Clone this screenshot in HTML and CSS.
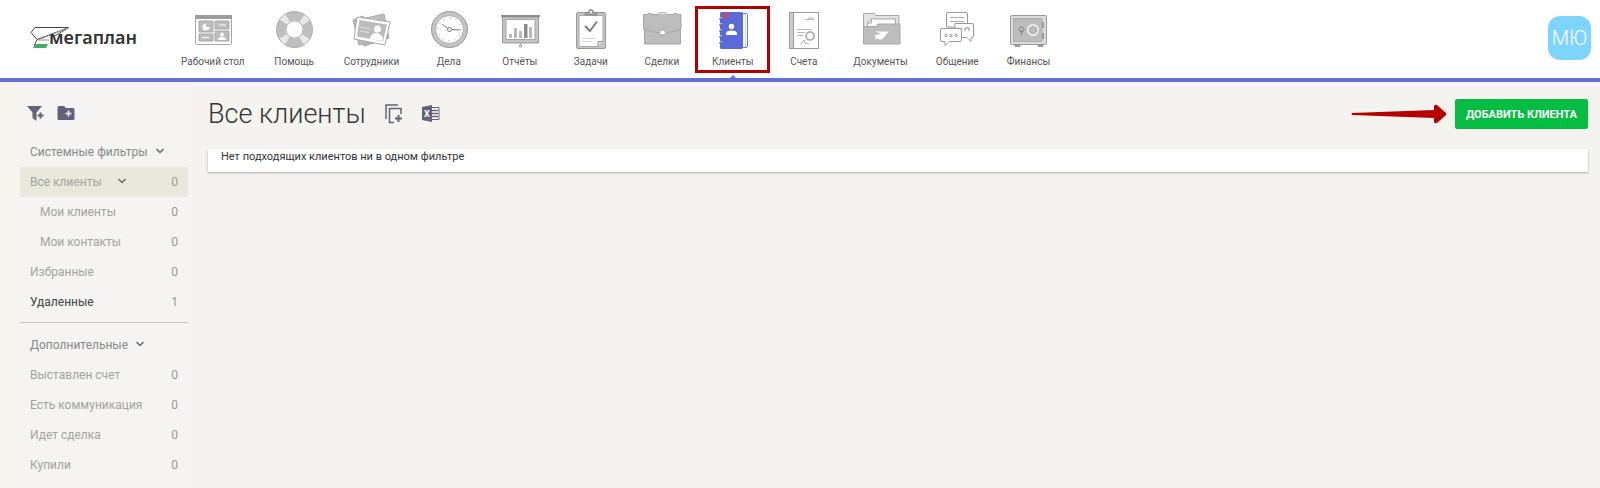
FILE: index.html
```
<!DOCTYPE html>
<html lang="ru">
  <head>
    <meta charset="utf-8" />
    <meta name="viewport" content="width=device-width, initial-scale=1.0" />
    <title>Все клиенты - Мегаплан</title>
    <link rel="stylesheet" href="styles.css">
  </head>

  <body>
    <header class="topbar">
      <a href="#" class="logo" aria-label="Мегаплан">
        <svg class="logo-plane" width="40" height="24" viewBox="0 0 40 24" fill="none" stroke="#444" stroke-linejoin="round">
          <path d="M6 18h12l-2 4H3z" fill="#3fae62" stroke="none" />
          <path d="M5 1.500h34L23 11M5 1.500l-4 5 6 7L39 1.500M7 13.500 4 20" />
          <path d="M39 1.500 8 14l11 0" stroke="#999" />
        </svg>
        <span class="logo-text">мегаплан</span>
      </a>

      <nav class="menu">
        <a href="#" class="menu-item">
          <svg viewBox="0 0 44 40" fill="#bdbdbd">
            <rect x="4.500" y="6.500" width="36" height="29" rx="1" fill="#fff" stroke="#a5a5a5" />
            <path d="M4 6h37v4H4z" fill="#9d9d9d" />
            <path d="M8 12h14v11H8zM24 12h14v8H24zM8 25h14v7H8zM24 22h14v10H24z" stroke="#a8a8a8" />
            <path d="M15 14.500v3.500h3.500a3.500 3.500 0 1 1-3.500-3.500" fill="#fff" />
            <path d="M28 16h7M11 28.500h7" stroke="#fff" />
            <circle cx="31" cy="25.500" r="2" fill="#fff" />
            <path d="M27 31q0-3 4-3t4 3z" fill="#fff" />
          </svg>
          <span>Рабочий стол</span>
        </a>
        <a href="#" class="menu-item">
          <svg viewBox="0 0 44 40" fill="none">
            <circle cx="22.500" cy="20.500" r="13.500" stroke="#bfbfbf" stroke-width="9" />
            <circle cx="22.500" cy="20.500" r="13.500" stroke="#e8e8e8" stroke-width="9" stroke-dasharray="6 15.200" stroke-dashoffset="-7.600" />
            <circle cx="22.500" cy="20.500" r="18" stroke="#b0b0b0" />
            <circle cx="22.500" cy="20.500" r="8.500" stroke="#b0b0b0" />
          </svg>
          <span>Помощь</span>
        </a>
        <a href="#" class="menu-item">
          <svg viewBox="0 0 44 40" fill="#bcbcbc" stroke="#a8a8a8">
            <path d="m8 11 27-6 5 24-25 8z" />
            <path d="m4 11 10-4 15 24-19 5z" />
            <path d="m8 8 33 5-5 23-31-6z" fill="#fff" />
            <path d="m10.500 11 27.500 4.500-4 17-26-5z" stroke="none" />
            <path d="m11 18 10 2m-10 2 9 1.500M23 8l2 4 3-3" stroke="#ddd" fill="none" />
            <circle cx="28.500" cy="20" r="3.500" fill="#fff" stroke="none" />
            <path d="M21 29q2-5 6-5t7 5l-1 3-12-2z" fill="#fff" stroke="none" />
          </svg>
          <span>Сотрудники</span>
        </a>
        <a href="#" class="menu-item">
          <svg viewBox="0 0 44 40" fill="none" stroke="#999">
            <circle cx="22.500" cy="20.500" r="16" stroke="#c4c4c4" stroke-width="4" />
            <circle cx="22.500" cy="20.500" r="18" />
            <circle cx="22.500" cy="20.500" r="14" fill="#fff" stroke="#aaa" />
            <path d="m15.500 15.500 5 3.500M25 20.500l8 .500" stroke="#777" />
            <circle cx="22.500" cy="20.500" r="2" stroke="#777" />
            <circle cx="22.500" cy="20.500" r="11.500" stroke="#888" stroke-dasharray="1 5.020" />
          </svg>
          <span>Дела</span>
        </a>
        <a href="#" class="menu-item">
          <svg viewBox="0 0 44 40" fill="#c4c4c4">
            <path d="M4.500 8h36v26h-36z" stroke="#999" />
            <path d="M8 10.500h29v20H8z" fill="#fff" stroke="#a5a5a5" />
            <path d="M3 6h39v2H3z" fill="#8c8c8c" />
            <path d="M11 25h3v4h-3zM16 19h3v10h-3zM21 22h3v7h-3zM31 18h3v11h-3z" fill="#b8b8b8" />
            <path d="M26 15h3.500v14H26z" fill="#8c8c8c" />
            <path d="M22.500 34v2" stroke="#999" />
            <circle cx="22.500" cy="37" r="1.200" fill="#fff" stroke="#999" />
          </svg>
          <span>Отчёты</span>
        </a>
        <a href="#" class="menu-item">
          <svg viewBox="0 0 44 40" fill="none" stroke="#999">
            <rect x="7.500" y="3.500" width="29" height="36" rx="1.500" fill="#c6c6c6" />
            <path d="M10 6.500h24v26l-5 5H10z" fill="#fff" stroke="#aaa" />
            <path d="M29 37.500v-5h5" fill="#ddd" />
            <path d="M16 6V3.500h3.500q0-3 2.500-3t2.500 3H28V6z" fill="#aaa" stroke="#888" />
            <circle cx="22" cy="3" r="1" fill="#fff" stroke="none" />
            <path d="m16 17 5 5 7-9.500" stroke="#808080" stroke-width="2" />
            <path d="M13 29.500h14M13 32.500h10" stroke="#d5d5d5" />
          </svg>
          <span>Задачи</span>
        </a>
        <a href="#" class="menu-item">
          <svg viewBox="0 0 44 40" fill="#bdbdbd" stroke="#a5a5a5">
            <path d="M4.500 20h36v15h-36z" />
            <path d="M3.500 5.500h37.500V20q-7 3-14 3.500h-9.500q-7-.500-14-3.500z" />
            <path d="M18 5.500q0-2 4.500-2t4.500 2M8 5.500v-1h3v1M34 5.500v-1h3v1" fill="#eee" />
            <ellipse cx="22.500" cy="23.500" rx="3" ry="2.500" fill="#fff" />
          </svg>
          <span>Сделки</span>
        </a>
        <a href="#" class="menu-item active">
          <svg viewBox="0 0 44 40" fill="#5a6ad8">
            <path d="M31 4.500h4q1.500 0 1.500 1.500v31q0 1.500-1.500 1.500h-4z" fill="#fff" stroke="#6a79dc" />
            <rect x="9" y="3" width="23" height="37" rx="1.500" />
            <path d="M34.500 5v33" stroke="#cdd3f5" />
            <path d="M8 9h3M8 15h3M8 21h3M8 27h3M8 33h3" stroke="#fff" />
            <path d="M8 10h3M8 16h3M8 22h3M8 28h3M8 34h3" stroke="#4555c4" />
            <path d="M13 4h4v6l-2-2-2 2z" fill="#e8403f" />
            <circle cx="20.500" cy="17.500" r="2.700" fill="#fff" />
            <path d="M15 26v-1.500q0-3 5.500-3t5.500 3V26z" fill="#fff" />
          </svg>
          <span>Клиенты</span>
        </a>
        <a href="#" class="menu-item">
          <svg viewBox="0 0 44 40" fill="none" stroke="#aaa">
            <rect x="7.500" y="3.500" width="29" height="36" fill="#fff" stroke="#999" />
            <path d="M8 4h3.500v35H8z" fill="#ccc" stroke="none" />
            <path d="M11.500 4v35" stroke="#999" />
            <path d="M23 10.500h9M26 9h6M15 20.500h15M15 23.500h8M15 26.500h6" stroke="#b5b5b5" />
            <circle cx="28" cy="27" r="4" stroke="#b5b5b5" stroke-width="2" />
            <path d="m19 35 3-4 1 3 4 1" />
          </svg>
          <span>Счета</span>
        </a>
        <a href="#" class="menu-item">
          <svg viewBox="0 0 44 40" fill="#e2e2e2" stroke="#a8a8a8">
            <path d="M4.500 20V4.500h11l1 2h23.500V20z" />
            <path d="M8.500 24V14l4-4h24v14z" fill="#fff" />
            <path d="M8.500 14h4v-4" fill="none" />
            <path d="M4.500 17.500H17l2-2.500h22v20H4.500z" fill="#bdbdbd" />
            <path d="M16 22.500h14l-7 8h-3l-1-1-3 1 1-3-2-1 7-2z" fill="#fff" stroke="none" />
          </svg>
          <span>Документы</span>
        </a>
        <a href="#" class="menu-item">
          <svg viewBox="0 0 44 40" fill="#fff" stroke="#999" stroke-linejoin="round">
            <path d="M13 3.500h18q1.500 0 1.500 1.500v13H11.500V5q0-1.500 1.500-1.500z" />
            <path d="M15 8.500h14M15 12.500h14" stroke="#aaa" />
            <path d="M20 14.500h17q1.500 0 1.500 1.500v11q0 1.500-1.500 1.500h-1v4l-4-4H20z" />
            <path d="m23 18.500 2 2 2-2M30 22v-3h4v3" stroke="#888" fill="none" />
            <path d="M7 19.500h18q1.500 0 1.500 1.500v10q0 1.500-1.500 1.500H14l-4 4v-4H7q-1.500 0-1.500-1.500V21q0-1.500 1.500-1.500z" />
            <g fill="none"><circle cx="11" cy="26.500" r="1.200" /><circle cx="16" cy="26.500" r="1.200" /><circle cx="21" cy="26.500" r="1.200" /></g>
          </svg>
          <span>Общение</span>
        </a>
        <a href="#" class="menu-item">
          <svg viewBox="0 0 44 40" fill="#dcdcdc" stroke="#999">
            <path d="M9 36h5v1.500H9zM32 36h5v1.500h-5z" fill="#999" />
            <rect x="4.500" y="6.500" width="36" height="29" rx="1" />
            <path d="M7.500 9.500H36v23H7.500z" fill="#bdbdbd" stroke="#aaa" />
            <path d="M37 13v6M37 24v6" stroke-width="2" />
            <g fill="none">
              <circle cx="15.500" cy="20.500" r="2.500" stroke="#808080" />
              <path d="M15.500 21v5" stroke="#808080" />
              <circle cx="27" cy="21" r="5" stroke="#eee" stroke-width="2" />
              <circle cx="27" cy="21" r="3.500" stroke="#999" stroke-dasharray="2 1" />
            </g>
          </svg>
          <span>Финансы</span>
        </a>
      </nav>

      <a href="#" class="avatar">МЮ</a>
    </header>

    <div class="page">
      <aside class="sidebar">
        <div class="tools">
          <button type="button" class="icon-button" aria-label="Добавить фильтр">
            <svg width="18" height="18" viewBox="0 0 18 18" fill="#62627a">
              <path d="M0 2h15L9.500 8.500V17L5.500 14V8.500z" />
              <path d="M13.500 8.500v6M10.500 11.500h6" stroke="#f5f4f2" stroke-width="4" />
              <path d="M13.500 8.500v6M10.500 11.500h6" stroke="#62627a" stroke-width="2" />
            </svg>
          </button>
          <button type="button" class="icon-button" aria-label="Добавить папку">
            <svg width="18" height="18" viewBox="0 0 18 18" fill="#62627a">
              <path d="M2 2h5l2 2h7q1.500 0 1.500 1.500v9q0 1.500-1.500 1.500H2Q.500 16 .500 14.500v-11Q.500 2 2 2z" />
              <path d="M11.500 6.500v6M8.500 9.500h6" stroke="#fff" stroke-width="1.500" />
            </svg>
          </button>
        </div>

        <button type="button" class="group">
          Системные фильтры
          <svg class="chevron" viewBox="0 0 8 8"><path d="m.500 1 3.500 3.500L7.500 1" /></svg>
        </button>
        <ul class="filters">
          <li>
            <a href="#" class="filter current">
              <span>Все клиенты</span>
              <svg class="chevron" viewBox="0 0 8 8"><path d="m.500 1 3.500 3.500L7.500 1" /></svg>
              <span class="count">0</span>
            </a>
          </li>
          <li><a href="#" class="filter nested"><span>Мои клиенты</span><span class="count">0</span></a></li>
          <li><a href="#" class="filter nested"><span>Мои контакты</span><span class="count">0</span></a></li>
          <li><a href="#" class="filter"><span>Избранные</span><span class="count">0</span></a></li>
          <li><a href="#" class="filter filled"><span>Удаленные</span><span class="count">1</span></a></li>
        </ul>

        <hr>

        <button type="button" class="group">
          Дополнительные
          <svg class="chevron" viewBox="0 0 8 8"><path d="m.500 1 3.500 3.500L7.500 1" /></svg>
        </button>
        <ul class="filters">
          <li><a href="#" class="filter"><span>Выставлен счет</span><span class="count">0</span></a></li>
          <li><a href="#" class="filter"><span>Есть коммуникация</span><span class="count">0</span></a></li>
          <li><a href="#" class="filter"><span>Идет сделка</span><span class="count">0</span></a></li>
          <li><a href="#" class="filter"><span>Купили</span><span class="count">0</span></a></li>
        </ul>
      </aside>

      <main class="content">
        <div class="title-row">
          <h1>Все клиенты</h1>
          <button type="button" class="icon-button" aria-label="Копировать">
            <svg width="18" height="20" viewBox="0 0 18 20" fill="none" stroke="#62627a" stroke-width="1.500">
              <path d="M1 15V1h12M9 18.500H4.500V4.500h11.500V10" />
              <path d="M13.500 11v7M10 14.500h7" stroke-width="2" />
            </svg>
          </button>
          <button type="button" class="icon-button" aria-label="Экспорт в Excel">
            <svg width="18" height="20" viewBox="0 0 18 20" fill="#62627a">
              <path d="M9 3.500h8v12H9z" fill="#fff" stroke="#62627a" />
              <path d="M10 6.500h6M10 9.500h6M10 12.500h6" stroke="#62627a" stroke-width="1.500" />
              <path d="M0 3 10 1v17L0 16z" />
              <text x="2" y="13" class="excel-mark">X</text>
            </svg>
          </button>
          <svg class="arrow" width="96" height="20" viewBox="0 0 96 20" fill="#b50000">
            <path d="M1 9q-1 1 0 2l82 3v4q1 2 3 1l9-8v-2L86 1q-2-1-3 1v4z" />
          </svg>
          <button type="button" class="add-button">Добавить клиента</button>
        </div>
        <section class="card">
          <p>Нет подходящих клиентов ни в одном фильтре</p>
        </section>
      </main>
    </div>
  </body>
</html>
```

FILE: styles.css
```
* {
  box-sizing: border-box;
}

body {
  margin: 0;
  font-family: Roboto, "Liberation Sans", sans-serif;
  font-size: 12px;
  color: #333;
  background-color: #f6f2f1;
}

a {
  color: inherit;
  text-decoration: none;
}

button {
  padding: 0;
  border: none;
  background: none;
  font: inherit;
  cursor: pointer;
}

.topbar {
  display: flex;
  align-items: flex-start;
  padding: 0 9px 0 30px;
  background-color: #fff;
  border-bottom: 4px solid #6270d4;
}

.logo {
  position: relative;
  width: 137px;
  padding: 25px 0 0 19px;
}

.logo-plane {
  position: absolute;
  top: 26px;
  left: 0;
}

.logo-text {
  position: relative;
  font-family: "Noto Sans", sans-serif;
  font-size: 18px;
  font-weight: 600;
  line-height: 24px;
}

.menu {
  display: flex;
}

.menu-item {
  position: relative;
  display: flex;
  flex-direction: column;
  align-items: center;
  min-width: 71px;
  height: 78px;
  padding: 9px 14px 0;
  font-size: 10px;
  line-height: 16px;
  color: #555;
  white-space: nowrap;
}

.menu-item svg {
  width: 44px;
  height: 40px;
  margin: 0 -1px 5px;
}

.active::before {
  content: "";
  position: absolute;
  top: 6px;
  left: -2px;
  right: -2px;
  height: 61px;
  border: 3px solid #b50000;
}

.active::after {
  content: "";
  position: absolute;
  bottom: 0;
  left: 50%;
  margin-left: -3px;
  border: 3px solid transparent;
  border-top: none;
  border-bottom-color: #6270d4;
}

.avatar {
  width: 43px;
  margin: 16px 0 0 auto;
  border-radius: 12px;
  background-color: #7dd4fd;
  font-size: 20px;
  font-weight: 300;
  line-height: 44px;
  text-align: center;
  color: #fff;
}

.page {
  display: flex;
}

.sidebar {
  flex: none;
  width: 208px;
  padding: 16px 20px 8px;
  background: linear-gradient(to right, #f5f5ed 12px, #f5f4f2 20px, #f5f4f2 188px, #f6f2f1 196px);
}

.tools {
  display: flex;
  gap: 12px;
  height: 32px;
  padding-left: 7px;
  margin-bottom: 7px;
}

.icon-button {
  display: flex;
  align-items: center;
}

.tools .icon-button {
  height: 30px;
}

.group {
  display: flex;
  align-items: center;
  gap: 8px;
  height: 30px;
  padding-left: 10px;
  color: #888;
}

.chevron {
  width: 8px;
  height: 8px;
  fill: none;
  stroke: #666;
  stroke-width: 1.5;
}

.filters {
  margin: 0;
  padding: 0;
  list-style: none;
}

.filter {
  display: flex;
  align-items: center;
  gap: 16px;
  height: 30px;
  padding: 0 10px;
  color: #a3a3a1;
}

.filter.current {
  background-color: #e8e8dd;
}

.nested {
  padding-left: 20px;
}

.filled {
  color: #444;
}

.count {
  margin-left: auto;
  color: #999;
}

hr {
  margin: 5px 0 7px;
  border: none;
  border-top: 1px solid #c6c5c4;
}

.content {
  flex: 1;
  padding: 16px 12px 0 0;
  background: linear-gradient(#f5f3ef 90px, #f6f2f1 120px);
}

.title-row {
  display: flex;
  align-items: center;
  gap: 19px;
  height: 32px;
  margin-bottom: 19px;
}

h1 {
  margin: 0;
  font-size: 27px;
  font-weight: 300;
  line-height: 32px;
}

.excel-mark {
  font-size: 9px;
  font-weight: 700;
  fill: #fff;
}

.arrow {
  margin-left: auto;
}

.add-button {
  height: 30px;
  margin-left: -11px;
  padding: 0 11px;
  border-radius: 2px;
  background-color: #05bd42;
  font-size: 11px;
  font-weight: 700;
  text-transform: uppercase;
  color: #fff;
}

.card {
  height: 23px;
  padding: 0 13px;
  background-color: #fff;
  box-shadow: 0 1px 2px #aaa;
}

.card p {
  margin: 0;
  font-size: 11px;
  line-height: 16px;
}
```
